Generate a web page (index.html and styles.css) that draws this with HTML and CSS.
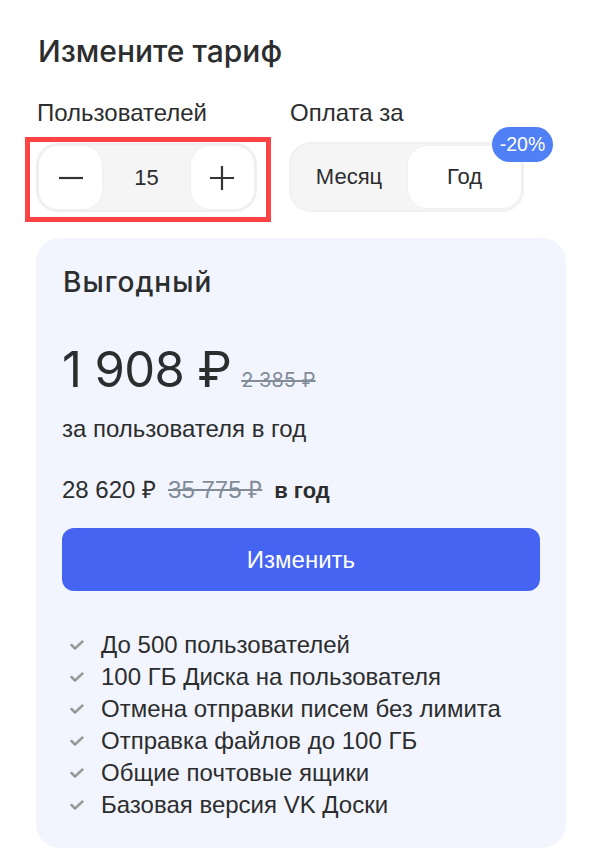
FILE: index.html
```html
<!DOCTYPE html>
<html lang="ru">
<head>
<meta charset="utf-8">
<link rel="stylesheet" href="styles.css">
</head>
<body>
<main class="page">
  <h1 class="title">Измените тариф</h1>
  <div class="controls">
    <div class="group users">
      <div class="label">Пользователей</div>
      <div class="stepper">
        <button class="step-btn" aria-label="minus">
          <svg width="24" height="24" viewBox="0 0 24 24"><path d="M0 12h24" stroke="#333" stroke-width="2.2" fill="none"/></svg>
        </button>
        <span class="count">15</span>
        <button class="step-btn" aria-label="plus">
          <svg width="24" height="24" viewBox="0 0 24 24"><path d="M0 12h24M12 0v24" stroke="#333" stroke-width="2.2" fill="none"/></svg>
        </button>
      </div>
      <div class="highlight"></div>
    </div>
    <div class="group pay">
      <div class="label">Оплата за</div>
      <div class="toggle">
        <span class="seg">Месяц</span>
        <span class="seg active">Год</span>
        <span class="badge">-20%</span>
      </div>
    </div>
  </div>

  <section class="card">
    <h2 class="plan">Выгодный</h2>
    <div class="price-row">
      <span class="price">1 908 ₽</span>
      <span class="old-price">2 385 ₽</span>
    </div>
    <p class="per">за пользователя в год</p>
    <p class="total"><span>28 620 ₽</span><s class="old-total">35 775 ₽</s><b>в год</b></p>
    <button class="cta">Изменить</button>
    <ul class="features">
      <li><svg class="chk" width="14" height="10" viewBox="0 0 14 10"><path d="M1.5 5l3.5 3.5L12.5 1.5" stroke="#9a9a9a" stroke-width="2.5" fill="none" stroke-linecap="round" stroke-linejoin="round"/></svg>До 500 пользователей</li>
      <li><svg class="chk" width="14" height="10" viewBox="0 0 14 10"><path d="M1.5 5l3.5 3.5L12.5 1.5" stroke="#9a9a9a" stroke-width="2.5" fill="none" stroke-linecap="round" stroke-linejoin="round"/></svg>100 ГБ Диска на пользователя</li>
      <li><svg class="chk" width="14" height="10" viewBox="0 0 14 10"><path d="M1.5 5l3.5 3.5L12.5 1.5" stroke="#9a9a9a" stroke-width="2.5" fill="none" stroke-linecap="round" stroke-linejoin="round"/></svg>Отмена отправки писем без лимита</li>
      <li><svg class="chk" width="14" height="10" viewBox="0 0 14 10"><path d="M1.5 5l3.5 3.5L12.5 1.5" stroke="#9a9a9a" stroke-width="2.5" fill="none" stroke-linecap="round" stroke-linejoin="round"/></svg>Отправка файлов до 100 ГБ</li>
      <li><svg class="chk" width="14" height="10" viewBox="0 0 14 10"><path d="M1.5 5l3.5 3.5L12.5 1.5" stroke="#9a9a9a" stroke-width="2.5" fill="none" stroke-linecap="round" stroke-linejoin="round"/></svg>Общие почтовые ящики</li>
      <li><svg class="chk" width="14" height="10" viewBox="0 0 14 10"><path d="M1.5 5l3.5 3.5L12.5 1.5" stroke="#9a9a9a" stroke-width="2.5" fill="none" stroke-linecap="round" stroke-linejoin="round"/></svg>Базовая версия VK Доски</li>
    </ul>
  </section>
</main>
</body>
</html>
```

FILE: styles.css
```css
* { box-sizing: border-box; }
html, body { margin: 0; padding: 0; background: #fff; }
body {
  font-family: "Liberation Sans", Arial, sans-serif;
  color: #2c2d2e;
}
.page {
  padding: 33px 24px 0 36px;
}
.title {
  margin: 0 0 0 2px;
  font-family: Inter, "Noto Sans", sans-serif;
  font-weight: 500;
  font-size: 30px;
  line-height: 36px;
  letter-spacing: 0;
}
.controls {
  margin-top: 30px;
  display: flex;
  gap: 32px;
}
.group { position: relative; }
.users { width: 221px; }
.pay { width: 235px; }
.label {
  font-size: 24px;
  line-height: 28px;
  height: 28px;
  padding-left: 1px;
}
.stepper {
  margin-top: 16px;
  height: 69px;
  border: 2px solid #efefef;
  background: #f5f5f5;
  border-radius: 22px;
  display: flex;
  align-items: center;
  justify-content: space-between;
}
.step-btn {
  width: 65px;
  height: 65px;
  border: 1px solid #f0f0f0;
  background: #fff;
  border-radius: 20px;
  display: flex;
  align-items: center;
  justify-content: center;
  padding: 0;
}
.count {
  font-size: 22px;
}
.highlight {
  position: absolute;
  left: -11px;
  top: 38px;
  width: 246px;
  height: 85px;
  border: 5px solid #fd4343;
  pointer-events: none;
}
.toggle {
  position: relative;
  margin-top: 15px;
  height: 70px;
  border: 2px solid #f1f1f1;
  background: #f5f5f5;
  border-radius: 22px;
  display: grid;
  grid-template-columns: 116px 1fr;
  padding: 1px 0;
}
.seg {
  display: flex;
  align-items: center;
  justify-content: center;
  font-size: 22px;
  border-radius: 20px;
}
.seg.active {
  background: #fff;
  border: 1px solid #f0f0f0;
}
.badge {
  position: absolute;
  right: -31px;
  top: -17px;
  width: 61px;
  height: 35px;
  border-radius: 18px;
  background: #5080f5;
  color: #fff;
  font-size: 19.5px;
  display: flex;
  align-items: center;
  justify-content: center;
}
.card {
  margin-top: 26px;
  width: 530px;
  height: 610px;
  background: #f2f5fd;
  border-radius: 24px;
  padding: 26px 26px 0 26px;
}
.plan {
  margin: 0 0 0 1px;
  font-family: Inter, "Noto Sans", sans-serif;
  font-weight: 500;
  font-size: 28px;
  line-height: 36px;
  letter-spacing: 1px;
}
.price-row {
  margin-top: 42px;
  height: 56px;
  display: flex;
  align-items: baseline;
  gap: 10px;
}
.price {
  font-family: Inter, "Noto Sans", sans-serif;
  font-weight: 400;
  font-size: 49px;
  line-height: 56px;
  letter-spacing: -0.6px;
}
.old-price {
  font-family: Inter, "Noto Sans", sans-serif;
  font-size: 20px;
  color: #818c99;
  text-decoration: line-through;
}
.per {
  margin: 17px 0 0;
  font-size: 24px;
  line-height: 28px;
}
.total {
  margin: 34px 0 0;
  font-size: 24px;
  line-height: 26px;
  display: flex;
  align-items: baseline;
  gap: 12px;
}
.old-total { color: #818c99; }
.total b { font-weight: 700; font-size: 22px; }
.cta {
  margin-top: 24px;
  width: 478px;
  height: 63px;
  border: 0;
  border-radius: 12px;
  background: #4664f2;
  color: #fff;
  font-family: "Liberation Sans", Arial, sans-serif;
  font-size: 24px;
  padding: 0;
}
.features {
  list-style: none;
  margin: 38px 0 0;
  padding: 0 0 0 8px;
}
.features li {
  font-size: 24px;
  line-height: 32px;
  display: flex;
  align-items: center;
}
.chk { margin-right: 17px; flex: none; }
```
